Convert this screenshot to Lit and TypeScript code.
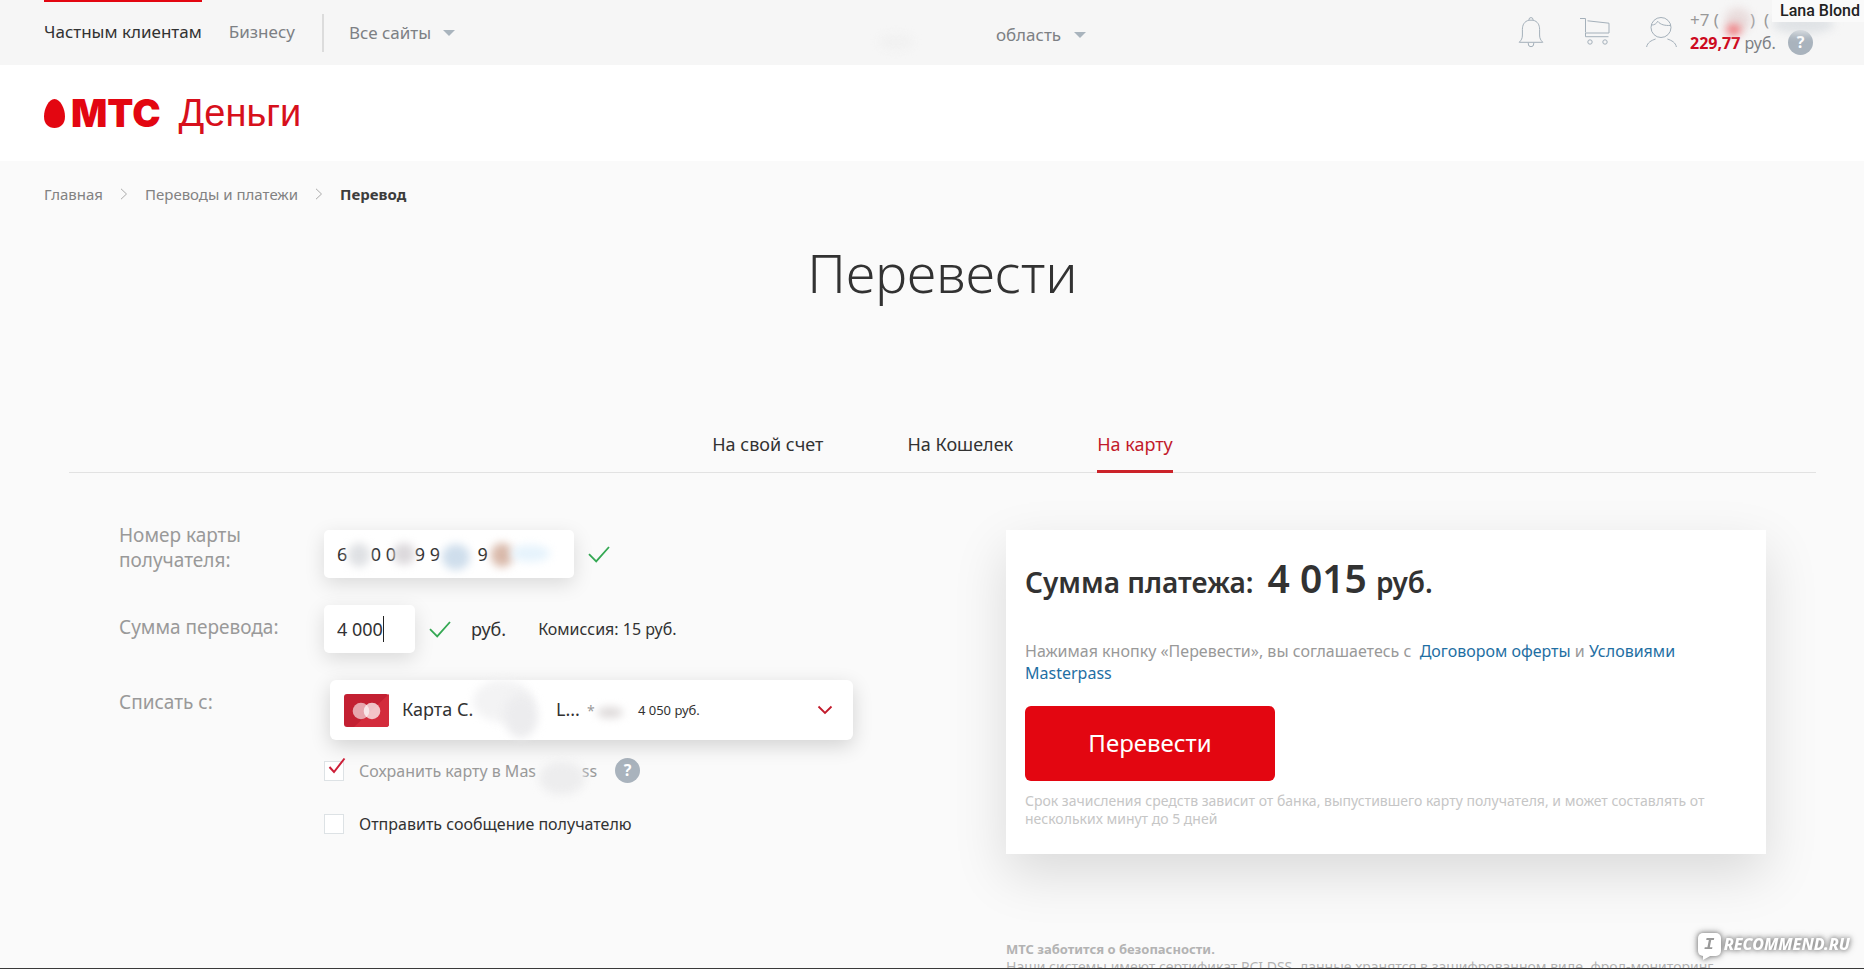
import { LitElement, html, svg, css } from "lit";
import { customElement, state } from "lit/decorators.js";
import { classMap } from "lit/directives/class-map.js";

const NB = "\u00a0";

const tick = html`<svg class="tick" viewBox="0 0 22 17" width="22" height="17" aria-hidden="true">
  <path d="M1 8.2 8.2 15.4 21 1" fill="none" stroke="#34a853" stroke-width="1.8" /></svg>`;

const crumbArrow = html`<svg viewBox="0 0 8 12" width="8" height="12" aria-hidden="true">
  <path d="M1 .8 6.5 6 1 11.2" fill="none" stroke="#aaa" stroke-width="1" /></svg>`;

const caret = html`<svg viewBox="0 0 12 6" width="12" height="6" aria-hidden="true">
  <path d="M0 0H12L6 6Z" fill="#a9b4bd" /></svg>`;

const bell = svg`<g fill="none" stroke="#a4b0ba" stroke-width="1">
  <path d="M11 3.2V2.6A2 2 0 0 1 15 2.6V3.2" />
  <path d="M11 3.2C6.2 4.3 4.4 8 4.4 12.5V18C4.4 21.5 3.4 23 1.2 25.3H24.8C22.6 23 21.6 21.5 21.6 18V12.5C21.6 8 19.8 4.3 15 3.2Z" />
  <path d="M10.3 25.8V27A2.7 2.7 0 0 0 15.7 27V25.8" /></g>`;

const cart = svg`<g fill="none" stroke="#a4b0ba" stroke-width="1">
  <path d="M0 1.5H5.5V15.5" /><path d="M7.5 3.8 29 6.2V16H5.500V19.7H28.500" />
  <circle cx="10" cy="25" r="2.2" /><circle cx="25" cy="25" r="2.2" /></g>`;

const person = svg`<g fill="none" stroke="#a4b0ba" stroke-width="1">
  <circle cx="15" cy="11.5" r="10" />
  <path d="M5.3 9C8.500 9.2 10.500 7.500 11.7 5.3 14.500 8.8 19 9.8 24.8 9.4" />
  <path d="M.6 31C1.500 26.500 5 24.6 9.6 23M30.4 31C29.500 26.500 26 24.6 21.4 23" /></g>`;

@customElement("app-root")
export class AppRoot extends LitElement {
  @state() private tab = 2;

  static styles = css`
    :host {
      display: block;
      font-family: "Noto Sans", "Open Sans", sans-serif;
      color: #323232;
    }
    * { box-sizing: border-box; }
    a { color: inherit; text-decoration: none; }
    button, input, select { font: inherit; color: inherit; }
    svg { display: block; flex: none; }
    .page {
      position: relative;
      height: 100vh;
      overflow: hidden;
      background: #fafafa;
      border-bottom: 1px solid #3a3a3a;
    }

    .topbar {
      display: grid;
      grid-template-columns: 1fr auto 1fr;
      height: 65px;
      padding: 0 51px 0 44px;
      background: #f6f6f6;
      font-size: 17px;
      color: #7d8084;
    }
    .sites { display: flex; align-items: center; }
    .sites a { line-height: 59px; border-top: 2px solid transparent; padding-bottom: 4px; }
    .sites a.current { color: #323232; border-color: #e30611; }
    .sites a + a { margin-left: 27px; }
    .sites .all {
      display: flex;
      align-items: center;
      gap: 12px;
      margin-left: 27px;
      padding: 0 0 0 25px;
      height: 38px;
      border: 0;
      border-left: 2px solid #dcdcdc;
      background: none;
    }
    .region {
      position: relative;
      display: flex;
      align-items: center;
      gap: 13px;
      padding: 4px 0 0 225px;
      border: 0;
      background: none;
    }
    .tools { display: flex; justify-content: flex-end; align-items: center; }
    .tools .icon { margin-right: 36px; }
    .tools .icon.last { margin-right: 13px; }
    .account { display: grid; grid-template-columns: 82px 25px; column-gap: 16px; align-items: center; }
    .account .phone {
      grid-column: 1 / -1;
      position: relative;
      width: 123px;
      line-height: 20px;
      color: #999;
      white-space: nowrap;
    }
    .account .balance { font-size: 16px; line-height: 22px; white-space: nowrap; }
    .account .balance b { color: #cd0a20; }
    .help {
      width: 25px;
      height: 25px;
      padding: 0;
      border: 0;
      border-radius: 50%;
      background: #a9b3bd;
      color: #fff;
      font-weight: 700;
      font-size: 16px;
      line-height: 25px;
      text-align: center;
    }
    .smudge { position: absolute; border-radius: 50%; filter: blur(4px); pointer-events: none; }
    .p1 { left: 35px; top: -2px; width: 26px; height: 24px; background: #e9dcdc; }
    .p2 { left: 36px; top: 15px; width: 15px; height: 10px; background: #f0696e; }
    .p3 { left: 82px; top: 4px; width: 62px; height: 20px; background: #e0e3e6; }
    .r1 { left: 108px; top: 34px; width: 34px; height: 16px; background: #f1f1f1; }
    .nickname {
      position: absolute;
      top: 0;
      right: 0;
      padding: 0 4px 0 8px;
      background: #fafafa;
      font-family: Roboto, sans-serif;
      font-weight: 500;
      font-size: 16px;
      line-height: 22px;
      color: #222;
    }

    .brandbar { display: flex; align-items: center; height: 96px; padding: 0 44px; background: #fff; }
    .brand { display: flex; align-items: center; color: #e30611; line-height: 44px; }
    .brand .name { margin-left: 6px; font-family: Inter, sans-serif; font-weight: 900; font-size: 38px; }
    .brand .product { margin-left: 18px; font-family: "Liberation Sans", Arial, sans-serif; font-size: 38px; color: #d7101c; }

    .crumbs { display: flex; align-items: center; gap: 17px; padding: 22px 44px 0; font-size: 15px; line-height: 22px; color: #828282; }
    .crumbs b { color: #3c3c3c; }
    .main { margin: 0 48px 0 69px; }
    h1 { margin: 31px 0 0; font-weight: 300; font-size: 54px; line-height: 72px; text-align: center; }
    .tabs { display: flex; justify-content: center; gap: 84px; margin-top: 123px; border-bottom: 1px solid #e2e2e2; }
    .tabs button {
      margin-bottom: -1px;
      padding: 0 0 13px;
      border: 0;
      border-bottom: 3px solid transparent;
      background: none;
      font-size: 18px;
      line-height: 26px;
    }
    .tabs button.on { color: #c21a2b; border-color: #cb2229; }

    .columns { display: grid; grid-template-columns: 937fr 760fr; margin-top: 57px; padding-right: 50px; }
    .form {
      display: grid;
      grid-template-columns: 205px 1fr;
      align-content: start;
      row-gap: 27px;
      margin-left: 50px;
      font-size: 18px;
    }
    .caption { padding-top: 10px; font-size: 19px; line-height: 25px; color: #999; }
    .caption.tall { padding-top: 0; margin: -7px 0 -20px; }
    .row { display: flex; align-items: center; }
    .field {
      display: block;
      height: 48px;
      padding: 0 13px;
      border: 0;
      border-radius: 5px;
      background: #fff;
      box-shadow: 0 6px 20px rgba(0, 0, 0, 0.13);
      outline: none;
    }
    .over { position: relative; }
    .over .field { width: 250px; }
    .over .sum { width: 91px; }
    .cursor { position: absolute; left: 59px; top: 11px; width: 1px; height: 26px; background: #222; }
    .tick { margin-left: 14px; }
    .unit { margin-left: 20px; }
    .fee { margin-left: 32px; font-size: 16px; }
    .n1 { left: 24px; top: 13px; width: 22px; height: 24px; background: #dfe1e4; }
    .n2 { left: 69px; top: 13px; width: 22px; height: 22px; background: #dcd9dc; }
    .n3 { left: 118px; top: 14px; width: 28px; height: 26px; background: #cfdeec; }
    .n4 { left: 167px; top: 13px; width: 22px; height: 24px; background: #d9b9aa; }
    .n5 { left: 186px; top: 15px; width: 40px; height: 17px; background: #e6f3fc; }

    .source {
      position: relative;
      display: grid;
      width: 523px;
      height: 60px;
      margin-left: 6px;
      border-radius: 6px;
      background: #fff;
      box-shadow: 0 6px 20px rgba(0, 0, 0, 0.16);
    }
    .source select {
      grid-area: 1 / 1;
      width: 100%;
      padding: 0 70px 3px 72px;
      border: 0;
      border-radius: 6px;
      background: transparent;
      appearance: none;
      outline: none;
    }
    .source .detail {
      grid-area: 1 / 1;
      display: flex;
      align-items: center;
      padding: 0 20px 0 14px;
      pointer-events: none;
    }
    .detail .holder { margin: 0 0 3px 167px; }
    .detail .mask { margin-left: 7px; width: 38px; font-size: 14px; color: #999; }
    .detail .left { margin: 0 auto 0 13px; font-size: 13px; }
    .s1 { left: 143px; top: 0; width: 60px; height: 42px; background: #f3f3f4; }
    .s2 { left: 174px; top: 14px; width: 34px; height: 44px; background: #ececee; }
    .s3 { left: 267px; top: 27px; width: 26px; height: 11px; background: #ddd9d9; }

    .stack { grid-column: 2; display: grid; gap: 29px; margin-top: -9px; }
    .option { display: flex; align-items: center; gap: 15px; font-size: 16px; line-height: 24px; }
    .option label { position: relative; }
    .option.muted { color: #999; }
    .option .box { position: relative; width: 20px; height: 20px; }
    .option input {
      width: 20px;
      height: 20px;
      margin: 0;
      display: block;
      appearance: none;
      border: 1px solid #dde2e5;
      background: #fff;
    }
    .option .mark { position: absolute; left: 4px; top: -4px; display: none; pointer-events: none; }
    .option input:checked + .mark { display: block; }
    .option .help { margin-left: 3px; }
    .m1 { right: 12px; top: 2px; width: 46px; height: 34px; background: #ededee; }

    .side { min-width: 0; }
    .card { padding: 19px 19px 26px; background: #fff; box-shadow: 0 20px 50px rgba(0, 0, 0, 0.13); }
    .total { margin: 0; display: flex; align-items: baseline; font-weight: 600; font-size: 28px; line-height: 58px; }
    .total strong { margin: 0 9px 0 14px; font-weight: 600; font-size: 39px; }
    .terms { margin: 29px 0 0; font-size: 16px; line-height: 22px; color: #999; }
    .terms a { color: #1f6fa3; }
    .pay {
      display: block;
      width: 250px;
      height: 75px;
      margin: 22px 0 11px;
      padding: 0 0 2px;
      border: 0;
      border-radius: 6px;
      background: #e30611;
      color: #fff;
      font-size: 24px;
    }
    .note { margin: 0; font-size: 14px; line-height: 18px; color: #c6c6c6; }
    .safety { margin: 86px 0 0; font-size: 14px; line-height: 18px; color: #b3b3b3; white-space: nowrap; }
    .safety b { display: block; font-size: 13px; }

    .watermark {
      position: absolute;
      right: 14px;
      bottom: 11px;
      display: flex;
      align-items: center;
      gap: 3px;
      font-weight: 800;
      font-style: italic;
      font-size: 16px;
      line-height: 26px;
      color: #fff;
      filter: drop-shadow(0 0 2px #888) drop-shadow(0 0 3px #aaa);
    }
    .watermark .bubble {
      position: relative;
      width: 23px;
      height: 23px;
      border-radius: 5px;
      background: #fff;
      color: #999;
      font: italic 700 17px/23px "Liberation Mono", monospace;
      text-align: center;
    }
    .watermark .bubble::after {
      content: "";
      position: absolute;
      left: 5px;
      top: 22px;
      border-top: 5px solid #fff;
      border-right: 9px solid transparent;
    }
  `;

  render() {
    const tabs = ["На свой счет", "На Кошелек", "На карту"];
    return html`
      <div class="page">
        <header>
          <div class="topbar">
            <nav class="sites">
              <a class="current" href="#">Частным клиентам</a>
              <a href="#">Бизнесу</a>
              <button class="all">Все сайты ${caret}</button>
            </nav>
            <button class="region"><i class="smudge r1"></i>область ${caret}</button>
            <div class="tools">
              <svg class="icon" viewBox="0 0 26 31" width="26" height="31" role="img" aria-label="Уведомления">${bell}</svg>
              <svg class="icon" viewBox="0 0 30 31" width="30" height="31" role="img" aria-label="Корзина">${cart}</svg>
              <svg class="icon last" viewBox="0 0 31 33" width="31" height="33" role="img" aria-label="Профиль">${person}</svg>
              <div class="account">
                <div class="phone">+7 (${NB.repeat(7)})${NB.repeat(2)}(<i class="smudge p1"></i><i class="smudge p2"></i><i class="smudge p3"></i></div>
                <div class="balance"><b>229,77</b> руб.</div>
                <button class="help" aria-label="Помощь">?</button>
              </div>
            </div>
          </div>
          <div class="brandbar">
            <a class="brand" href="#">
              <svg viewBox="0 0 21 29" width="21" height="29" aria-hidden="true">
                <path d="M10.5 0C16.5 0 21 10 21 17.5 21 25 16.5 29 10.5 29S0 25 0 17.5C0 10 4.5 0 10.5 0Z" fill="#e30611" /></svg>
              <span class="name">МТС</span><span class="product">Деньги</span>
            </a>
          </div>
        </header>

        <nav class="crumbs">
          <a href="#">Главная</a>${crumbArrow}<a href="#">Переводы и платежи</a>${crumbArrow}<b>Перевод</b>
        </nav>

        <main class="main">
          <h1>Перевести</h1>
          <div class="tabs">
            ${tabs.map((t, i) => html`<button class=${classMap({ on: i === this.tab })} @click=${() => (this.tab = i)}>${t}</button>`)}
          </div>

          <div class="columns">
            <form class="form" @submit=${(e: Event) => e.preventDefault()}>
              <label class="caption tall" for="card">Номер карты<br />получателя:</label>
              <div class="row">
                <div class="over">
                  <input id="card" class="field" .value=${"6" + NB.repeat(5) + "0 0" + NB.repeat(4) + "9 9" + NB.repeat(8) + "9"} />
                  <i class="smudge n1"></i><i class="smudge n2"></i><i class="smudge n3"></i><i class="smudge n4"></i><i class="smudge n5"></i>
                </div>
                ${tick}
              </div>

              <label class="caption" for="sum">Сумма перевода:</label>
              <div class="row">
                <div class="over">
                  <input id="sum" class="field sum" .value=${"4 000"} />
                  <i class="cursor"></i>
                </div>
                ${tick}
                <span class="unit">руб.</span>
                <span class="fee">Комиссия: 15 руб.</span>
              </div>

              <label class="caption" for="from">Списать с:</label>
              <div class="source">
                <select id="from"><option>Карта С.</option></select>
                <div class="detail">
                  <svg viewBox="0 0 45 33" width="45" height="33" aria-hidden="true">
                    <rect width="45" height="33" rx="3" fill="#c32032" />
                    <path d="M45 0V30Q45 33 42 33H10Z" fill="#d32c3c" />
                    <circle cx="17" cy="17" r="8.3" fill="#fff" opacity=".6" />
                    <circle cx="28" cy="17" r="8.3" fill="#fff" opacity=".72" /></svg>
                  <span class="holder">L...</span><span class="mask">*</span><span class="left">4 050 руб.</span>
                  <svg viewBox="0 0 16 10" width="16" height="10" aria-hidden="true">
                    <path d="M1.5 1.5 8 8 14.5 1.5" fill="none" stroke="#c21a2b" stroke-width="1.8" /></svg>
                </div>
                <i class="smudge s1"></i><i class="smudge s2"></i><i class="smudge s3"></i>
              </div>

              <div class="stack">
                <div class="option muted">
                  <span class="box"><input type="checkbox" id="save" checked />
                    <svg class="mark" viewBox="0 0 18 18" width="18" height="18" aria-hidden="true">
                      <path d="M1.5 10 6 15 16.5 1.5" fill="none" stroke="#cd1f38" stroke-width="2" /></svg></span>
                  <label for="save">Сохранить карту в Mas${NB.repeat(11)}ss<i class="smudge m1"></i></label>
                  <button class="help" type="button" aria-label="Подсказка">?</button>
                </div>
                <div class="option">
                  <span class="box"><input type="checkbox" id="notify" /></span>
                  <label for="notify">Отправить сообщение получателю</label>
                </div>
              </div>
            </form>

            <div class="side">
              <section class="card">
                <p class="total">Сумма платежа: <strong>4 015</strong> руб.</p>
                <p class="terms">Нажимая кнопку «Перевести», вы соглашаетесь с${NB} <a href="#">Договором оферты</a> и <a href="#">Условиями Masterpass</a></p>
                <button class="pay">Перевести</button>
                <p class="note">Срок зачисления средств зависит от банка, выпустившего карту получателя, и может составлять от нескольких минут до 5 дней</p>
              </section>
              <p class="safety"><b>МТС заботится о безопасности.</b>Наши системы имеют сертификат PCI DSS, данные хранятся в зашифрованном виде, фрод-мониторинг</p>
            </div>
          </div>
        </main>

        <div class="nickname">Lana Blond</div>
        <div class="watermark"><span class="bubble">I</span>RECOMMEND.RU</div>
      </div>
    `;
  }
}
